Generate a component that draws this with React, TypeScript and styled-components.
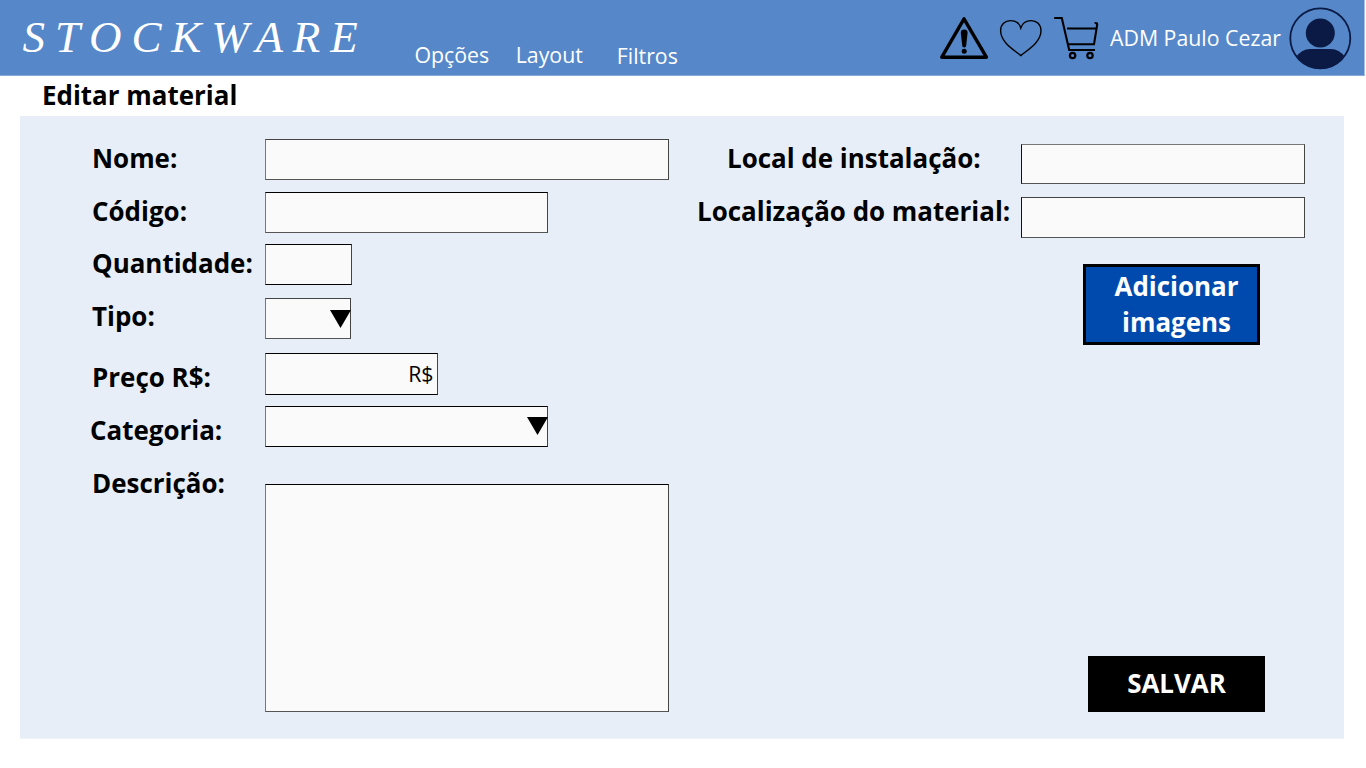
import React from "react";
import styled, { createGlobalStyle } from "styled-components";

const GlobalStyle = createGlobalStyle`
  * { box-sizing: border-box; }
  body { margin: 0; background: #fff; font-family: "Open Sans", "Noto Sans", sans-serif; color: #000; }
`;

const Page = styled.div`
  width: 1366px;
  height: 768px;
  overflow: hidden;
`;

const Header = styled.header`
  width: 1365px;
  height: 76px;
  display: flex;
  align-items: flex-start;
  background: #5587c9;
  border-bottom: 1px solid #86a9d8;
  border-right: 1px solid #a9c2e4;
`;

const Logo = styled.div`
  flex: none;
  width: 392px;
  padding: 11px 0 0 22.5px;
  font: italic 45px/52px "Liberation Serif", serif;
  letter-spacing: 9.9px;
  color: #fff;
  white-space: nowrap;
`;

const Nav = styled.nav`
  flex: none;
  width: 547px;
  padding: 40px 0 0 22.4px;
  display: flex;
`;

const NavLink = styled.a<{ $gap?: number; $drop?: number }>`
  margin-left: ${(p) => p.$gap ?? 0}px;
  margin-top: ${(p) => p.$drop ?? 0}px;
  font-size: 21.3px;
  line-height: 30px;
  color: #fff;
  white-space: nowrap;
`;

const Icons = styled.div`
  flex: none;
  display: flex;
  padding-top: 12px;
  svg { display: block; }
`;

const UserName = styled.span`
  flex: none;
  width: 189px;
  margin-top: 23px;
  padding-left: 10px;
  font-size: 21.3px;
  line-height: 30px;
  color: #fff;
  white-space: nowrap;
`;

const Avatar = styled.svg`
  flex: none;
  display: block;
  margin-top: 7px;
`;

const Title = styled.h1`
  margin: 0;
  height: 40px;
  padding: 1px 0 0 42px;
  font-size: 25.95px;
  font-weight: 700;
  line-height: 36px;
`;

const Panel = styled.main`
  width: 1324px;
  height: 623px;
  margin-left: 20px;
  display: flex;
  background: #e7eef8;
  border-bottom: 1px solid #eff4fa;
`;

const LeftColumn = styled.section`
  width: 649px;
  padding: 23px 0 0 70px;
`;

const RightColumn = styled.section`
  width: 675px;
  padding-top: 24px;
  display: flex;
  flex-direction: column;
`;

const Row = styled.div<{ $gap?: number }>`
  display: flex;
  align-items: flex-start;
  margin-top: ${(p) => p.$gap ?? 0}px;
`;

const Label = styled.label<{ $w: number; $drop?: number; $indent?: number }>`
  width: ${(p) => p.$w}px;
  height: 36px;
  margin-top: ${(p) => p.$drop ?? 0}px;
  padding-left: ${(p) => p.$indent ?? 0}px;
  font-size: 25.95px;
  font-weight: 700;
  line-height: 36px;
  white-space: nowrap;
`;

const Field = styled.div<{ $w: number; $h?: number; $top?: string; $bottom?: string; $side?: string; $right?: string; $drop?: number }>`
  width: ${(p) => p.$w}px;
  height: ${(p) => p.$h ?? 41}px;
  margin-top: ${(p) => p.$drop ?? 0}px;
  display: flex;
  justify-content: flex-end;
  background: #fafafa;
  border: 1px solid;
  border-color: ${(p) => `${p.$top ?? "#000"} ${p.$right ?? "#444"} ${p.$bottom ?? "#555"} ${p.$side ?? "#777"}`};
`;

const Arrow = styled.svg<{ $drop: number }>`
  display: block;
  flex: none;
  margin-top: ${(p) => p.$drop}px;
  margin-right: -1px;
`;

const Currency = styled.span`
  padding: 5px 3.5px 0 0;
  font-size: 21.3px;
  line-height: 30px;
`;

const AddButton = styled.button`
  width: 177px;
  height: 81px;
  margin: 26px 0 0 414px;
  padding: 0 0 1px 10px;
  border: 3px solid #000;
  background: #004aad;
  color: #fff;
  font: 700 25.95px/36px "Open Sans", sans-serif;
`;

const SaveButton = styled.button`
  width: 177px;
  height: 56px;
  margin: auto 0 26px 419px;
  padding: 0 0 2px;
  border: 0;
  background: #000;
  color: #fff;
  font: 700 25.95px/36px "Open Sans", sans-serif;
`;

const DownArrow = ({ drop }: { drop: number }) => (
  <Arrow $drop={drop} width="21" height="18" viewBox="0 0 21 18">
    <path d="M0 0H21L10.5 18Z" />
  </Arrow>
);

export default function App() {
  return (
    <>
      <GlobalStyle />
      <Page>
        <Header>
          <Logo>STOCKWARE</Logo>
          <Nav>
            <NavLink>Opções</NavLink>
            <NavLink $gap={26.6}>Layout</NavLink>
            <NavLink $gap={34} $drop={1}>Filtros</NavLink>
          </Nav>
          <Icons>
            <svg width="161" height="52" viewBox="939 12 161 52" fill="none" stroke="#000">
              <path d="M964 18.8L986.4 57.2H941.8Z" strokeWidth="3.4" strokeLinejoin="round" />
              <path d="M960.8 32.8a3.4 3.4 0 0 1 6.8 0l-1.4 12.6a2 2 0 0 1-4 0Z" fill="#000" stroke="none" />
              <circle cx="964.2" cy="51.2" r="2.5" fill="#000" stroke="none" />
              <path d="M1020.8 55.6C1014 50 1000.6 42.4 1000.6 30.6C1000.6 24.6 1005 20.6 1010.4 20.6C1016 20.6 1019.6 24 1020.8 28C1022 24 1025.6 20.6 1031.2 20.6C1036.6 20.6 1041 24.6 1041 30.6C1041 42.4 1027.6 50 1020.8 55.6Z" strokeWidth="1.4" />
              <path d="M1054.2 18H1061.8L1069.2 50H1095M1067 28.5H1095.5M1068.5 44.3H1094L1097.2 24.5Q1097.2 22.8 1094.6 23" strokeWidth="2.1" />
              <circle cx="1072.6" cy="55.5" r="2.7" strokeWidth="2.2" />
              <circle cx="1090" cy="55.5" r="2.7" strokeWidth="2.2" />
            </svg>
          </Icons>
          <UserName>ADM Paulo Cezar</UserName>
          <Avatar width="63" height="63" viewBox="0 0 63 63">
            <defs>
              <clipPath id="avatar-disc"><circle cx="31.3" cy="31.3" r="30.5" /></clipPath>
            </defs>
            <circle cx="31.3" cy="31.3" r="30" fill="none" stroke="#0a1a44" strokeWidth="1.8" />
            <circle cx="31.3" cy="26" r="14.5" fill="#0a1a44" />
            <path clipPath="url(#avatar-disc)" fill="#0a1a44" d="M7 50Q13 42 21 42H42Q50 42 56 50V63H7Z" />
          </Avatar>
        </Header>
        <Title>Editar material</Title>
        <Panel>
          <LeftColumn>
            <Row>
              <Label $w={175} $drop={1} $indent={2}>Nome:</Label>
              <Field $w={404} $top="#444" />
            </Row>
            <Row $gap={12}>
              <Label $w={175} $drop={1} $indent={2}>Código:</Label>
              <Field $w={283} />
            </Row>
            <Row $gap={11}>
              <Label $w={175} $drop={1} $indent={2}>Quantidade:</Label>
              <Field $w={87} $bottom="#000" />
            </Row>
            <Row $gap={13}>
              <Label $w={175} $indent={2}>Tipo:</Label>
              <Field $w={86} $top="#444"><DownArrow drop={11} /></Field>
            </Row>
            <Row $gap={14}>
              <Label $w={175} $drop={6} $indent={2}>Preço R$:</Label>
              <Field $w={173} $h={42} $bottom="#000"><Currency>R$</Currency></Field>
            </Row>
            <Row $gap={11}>
              <Label $w={175} $drop={6}>Categoria:</Label>
              <Field $w={283} $bottom="#000"><DownArrow drop={10} /></Field>
            </Row>
            <Row $gap={16}>
              <Label $w={175} $drop={1} $indent={2}>Descrição:</Label>
              <Field $w={404} $h={228} $drop={20} />
            </Row>
          </LeftColumn>
          <RightColumn>
            <Row>
              <Label $w={352} $indent={58}>Local de instalação:</Label>
              <Field $w={284} $h={40} $drop={4} $top="#777" $side="#111" />
            </Row>
            <Row $gap={9}>
              <Label $w={352} $indent={28}>Localização do material:</Label>
              <Field $w={284} $drop={4} $top="#444" $side="#111" />
            </Row>
            <AddButton>Adicionar<br />imagens</AddButton>
            <SaveButton>SALVAR</SaveButton>
          </RightColumn>
        </Panel>
      </Page>
    </>
  );
}
